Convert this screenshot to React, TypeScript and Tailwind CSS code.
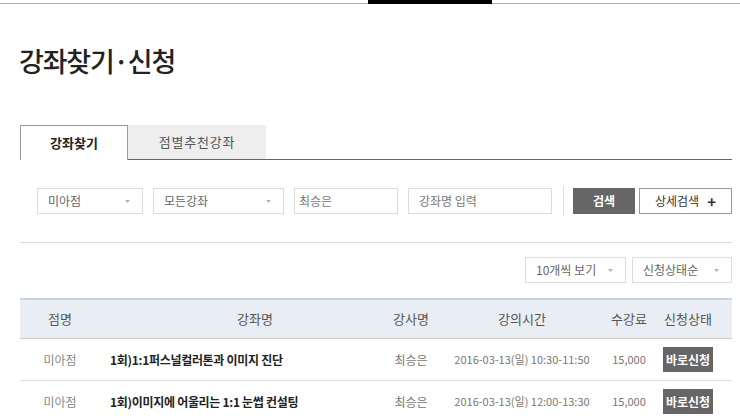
import React from "react"

// 강좌찾기 · 신청 page

const rows = [
  { branch: "미아점", title: "1회)1:1퍼스널컬러톤과 이미지 진단", teacher: "최승은", time: "2016-03-13(일) 10:30-11:50", fee: "15,000" },
  { branch: "미아점", title: "1회)이미지에 어울리는 1:1 눈썹 컨설팅", teacher: "최승은", time: "2016-03-13(일) 12:00-13:30", fee: "15,000" },
]

function Caret() {
  return (
    <svg width={5} height={3} viewBox="0 0 5 3" className="flex-shrink-0 text-[#b5b5b5]">
      <path d="M0 0H5L2.5 3Z" fill="currentColor" />
    </svg>
  )
}

function SelectBox({ label, className }: { label: string; className: string }) {
  return (
    <div className={`flex h-[26px] items-center justify-between border border-[#dcdcdc] bg-white pl-[10px] pr-[12px] text-[12px] text-[#666] ${className}`}>
      <span>{label}</span>
      <Caret />
    </div>
  )
}

export default function App() {
  return (
    <div className="relative h-[420px] w-[740px] overflow-hidden bg-white font-['Noto_Sans_CJK_KR','Noto_Sans',sans-serif] text-[#333]">
      {/* top nav strip */}
      <div className="flex h-[4px] items-end">
        <div className="h-px w-[368px] bg-[#b0b0b0]" />
        <div className="h-[4px] w-[124px] bg-black" />
        <div className="h-px flex-1 bg-[#b0b0b0]" />
      </div>

      {/* title */}
      <h1 className="ml-[19px] mt-[39px] text-[27px] font-medium leading-[36px] tracking-[-1.2px] text-[#222]">
        강좌찾기·신청
      </h1>

      {/* tabs */}
      <div className="ml-[20px] mr-[8px] mt-[46px] flex h-[35px] items-end">
        <div className="flex h-[35px] w-[108px] items-center justify-center border border-b-0 border-[#999] bg-white text-[13px] font-bold text-[#222]">
          강좌찾기
        </div>
        <div className="flex h-[35px] flex-1 items-end border-b border-[#666]">
          <div className="flex h-[34px] w-[138px] items-center justify-center bg-[#eeeeee] text-[13px] tracking-[0.8px] text-[#555]">
            점별추천강좌
          </div>
        </div>
      </div>

      {/* search filters */}
      <div className="ml-[37px] mt-[26px] flex items-center">
        <SelectBox label="미아점" className="w-[106px]" />
        <SelectBox label="모든강좌" className="ml-[10px] w-[131px]" />
        <div className="ml-[10px] flex h-[26px] w-[104px] items-center border border-[#dcdcdc] px-[4px] text-[12px] text-[#777]">최승은</div>
        <div className="ml-[10px] flex h-[26px] w-[144px] items-center border border-[#dcdcdc] px-[10px] text-[12px] text-[#777]">강좌명 입력</div>
        <div className="ml-[11px] h-[30px] w-px bg-[#e2e2e2]" />
        <button type="button" className="ml-[9px] flex h-[26px] w-[62px] items-center justify-center bg-[#666] text-[12px] font-bold text-white">
          검색
        </button>
        <button type="button" className="ml-[4px] flex h-[26px] w-[93px] items-center justify-center gap-[8px] border border-[#999] bg-white text-[12px] text-[#333]">
          <span>상세검색</span>
          <span className="text-[15px] font-bold leading-none">+</span>
        </button>
      </div>

      <div className="ml-[20px] mr-[8px] mt-[26px] h-px bg-[#dddddd]" />

      {/* sort */}
      <div className="mr-[8px] mt-[14px] flex justify-end gap-[6px]">
        <SelectBox label="10개씩 보기" className="w-[101px]" />
        <SelectBox label="신청상태순" className="w-[100px]" />
      </div>

      {/* table */}
      <div className="ml-[20px] mr-[8px] mt-[15px] border-t-2 border-[#cbd2df]">
        <div className="grid h-[39px] grid-cols-[80px_288px_46px_176px_38px_80px] items-center border-b border-[#cccccc] bg-[#e9edf4] text-[13px] text-[#555]">
          <div className="text-center">점명</div>
          <div className="pl-[22px] text-center">강좌명</div>
          <div className="text-center">강사명</div>
          <div className="text-center">강의시간</div>
          <div className="text-center">수강료</div>
          <div className="text-center">신청상태</div>
        </div>
        {rows.map((r, i) => (
          <div
            key={i}
            className="grid h-[42px] grid-cols-[80px_288px_46px_176px_38px_80px] items-center border-b border-[#dddddd] text-[12px]"
          >
            <div className="text-center text-[#888]">{r.branch}</div>
            <div className="pl-[10px] font-bold tracking-[-0.3px] text-[#222]">{r.title}</div>
            <div className="whitespace-nowrap text-center text-[#777]">{r.teacher}</div>
            <div className="whitespace-nowrap text-center text-[11px] text-[#777]">{r.time}</div>
            <div className="whitespace-nowrap text-center text-[11px] text-[#777]">{r.fee}</div>
            <div className="flex justify-center">
              <span className="flex h-[25px] w-[50px] items-center justify-center bg-[#666] text-[12px] font-bold text-white">
                바로신청
              </span>
            </div>
          </div>
        ))}
      </div>
    </div>
  )
}
